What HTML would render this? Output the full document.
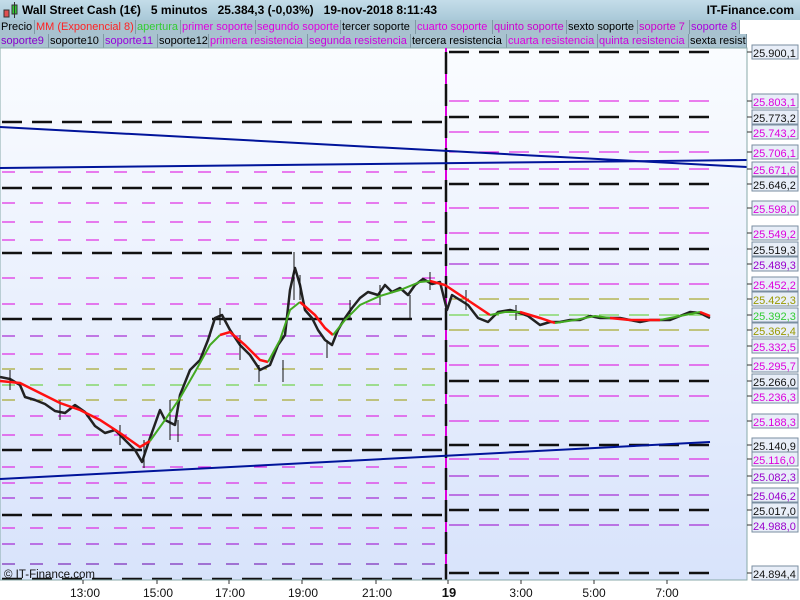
<!DOCTYPE html>
<html><head><meta charset="utf-8"><style>
*{margin:0;padding:0}
body{width:800px;height:600px;overflow:hidden;background:#fff;font-family:"Liberation Sans",sans-serif;position:relative}
#title{position:absolute;left:0;top:0;width:800px;height:20px;background:linear-gradient(#c4dde9,#a9c9d8);font-weight:bold;font-size:12px;line-height:20px}
.row{position:absolute;left:0;height:14px;font-size:11px;line-height:14px;white-space:nowrap;display:flex}
.row span{background:#a8c2cf;border-right:1px solid #7f98a4;padding:0 1px;box-sizing:border-box;overflow:hidden}
</style></head><body>
<div id="title"><svg width="18" height="18" style="position:absolute;left:2px;top:2px"><rect x="2" y="8" width="5" height="7" fill="#e05050" stroke="#333" stroke-width="1"/><rect x="10" y="3" width="5" height="9" fill="#3c3" stroke="#333"/><line x1="12.5" y1="0" x2="12.5" y2="16" stroke="#333"/></svg><span style="position:absolute;left:22px">Wall Street Cash (1€)&nbsp;&nbsp;&nbsp;5 minutos&nbsp;&nbsp;&nbsp;25.384,3 (-0,03%)&nbsp;&nbsp;&nbsp;19-nov-2018 8:11:43</span><span style="position:absolute;right:6px">IT-Finance.com</span></div>
<div class="row" style="top:20px;width:740px">
<span style="width:35px">Precio</span><span style="width:101px;color:#f22">MM (Exponencial 8)</span><span style="width:45px;color:#3c3">apertura</span><span style="width:75px;color:#d0d">primer soporte</span><span style="width:85px;color:#d0d">segundo soporte</span><span style="width:75px">tercer soporte</span><span style="width:77px;color:#d0d">cuarto soporte</span><span style="width:74px;color:#c0c">quinto soporte</span><span style="width:71px">sexto soporte</span><span style="width:52px;color:#c0c">soporte 7</span><span style="width:50px;color:#a0d">soporte 8</span></div>
<div class="row" style="top:34px;width:747px">
<span style="width:49px;color:#80c">soporte9</span><span style="width:55px">soporte10</span><span style="width:54px;color:#90d">soporte11</span><span style="width:51px">soporte12</span><span style="width:99px;color:#d0d">primera resistencia</span><span style="width:103px;color:#c0d">segunda resistencia</span><span style="width:96px">tercera resistencia</span><span style="width:91px;color:#d0d">cuarta resistencia</span><span style="width:91px;color:#c0d">quinta resistencia</span><span style="width:58px">sexta resist</span></div>
<svg width="800" height="600" style="position:absolute;left:0;top:0" font-family="Liberation Sans" font-size="12">
<defs><linearGradient id="bg" x1="0" y1="0" x2="0" y2="1"><stop offset="0" stop-color="#fafcff"/><stop offset="1" stop-color="#d8e3fb"/></linearGradient></defs>
<rect x="0" y="48" width="747" height="532" fill="url(#bg)" stroke="#8aa" stroke-width="1"/>
<g fill="none">
<g stroke="#111" stroke-width="2.5" stroke-dasharray="20 10">
<path d="M2 122H443M2 188H443M2 253H443M2 319H443M2 450H443M2 515H443M2 579H443"/></g>
<g stroke="#d0d" stroke-width="1" stroke-dasharray="13 15">
<path d="M2 172H443M2 203H443M2 222H443M2 240H443M2 278H443M2 304H443M2 354H443M2 416H443M2 435H443M2 467H443M2 483H443M2 528H443"/></g>
<g stroke-width="1" stroke-dasharray="13 15">
<path stroke="#90c" d="M2 336H443M2 498H443M2 544H443"/><path stroke="#60a" d="M2 564H443"/>
<path stroke="#990" d="M2 369H443M2 400H443"/><path stroke="#5c2" d="M2 385H443"/></g>
<g stroke="#111" stroke-width="2.5" stroke-dasharray="20 10">
<path d="M449 52H710M449 117H710M449 184H710M449 249H710M449 381H710M449 445H710M449 510H710M449 573H710"/></g>
<g stroke="#d0d" stroke-width="1" stroke-dasharray="20 10">
<path d="M449 101H710M449 132H710M449 152H710M449 169H710M449 208H710M449 233H710M449 284H710M449 346H710M449 365H710M449 396H710M449 421H710M449 459H710"/></g>
<g stroke-width="1" stroke-dasharray="20 10">
<path stroke="#90c" d="M449 264H710M449 476H710M449 495H710M449 525H710"/>
<path stroke="#990" d="M449 299H710M449 330H710"/><path stroke="#5c2" d="M449 315H710"/></g>
<path d="M446 48V580" stroke="#d0d" stroke-width="2"/>
<path d="M446 52V580" stroke="#111" stroke-width="2.5" stroke-dasharray="22 10"/>
<g stroke="#00149a" stroke-width="2"><path d="M0 127L747 167"/><path d="M0 168L747 160"/><path d="M0 479L710 442"/></g>
<polyline stroke="#222" stroke-width="2.5" stroke-linejoin="round" points="0,377 10,379 20,385 25,397 35,400 45,404 55,411 65,413 75,405 85,412 95,426 105,433 115,430 125,440 135,450 142,462 150,438 160,410 165,420 175,425 180,395 190,370 200,360 208,340 215,318 222,315 230,330 240,345 250,355 260,370 270,365 278,345 285,335 290,290 295,268 300,285 305,310 312,318 318,330 325,340 332,345 338,330 345,318 352,308 360,298 368,292 378,295 385,285 392,292 400,288 408,295 415,285 423,279 432,284 440,282 447,310 452,295 460,300 468,305 478,318 488,322 498,312 510,310 520,313 528,316 540,325 550,322 560,322 570,320 580,320 590,316 600,318 610,318 620,318 630,320 640,322 650,320 660,320 670,320 680,316 690,312 700,313 710,318"/>
<g stroke="#111" stroke-width="1"><path d="M144 440V468M178 420V442M259 365V382M294 252V300M283 360V382M327 340V358M410 295V318M466 290V310M516 305V320M10 370V390M60 400V420M120 425V445M170 400V440M220 308V325M240 335V360M300 275V300M350 300V320M380 285V305M430 272V290"/></g>
<polyline stroke="#f11" stroke-width="2.5" points="0,381 20,383 40,393 60,403 80,410 100,420 120,433 140,447 150,441"/>
<polyline stroke="#4a2" stroke-width="2" points="150,441 165,420 180,398 195,372 210,345 220,335"/>
<polyline stroke="#f11" stroke-width="2.5" points="220,335 230,332 245,345 260,360 268,362"/>
<polyline stroke="#4a2" stroke-width="2" points="268,362 280,340 290,310 300,302"/>
<polyline stroke="#f11" stroke-width="2.5" points="300,302 315,315 325,328 333,335"/>
<polyline stroke="#4a2" stroke-width="2" points="333,335 345,320 360,305 380,296 400,290 420,282 430,281"/>
<polyline stroke="#f11" stroke-width="2.5" points="430,281 445,285 460,295 475,305 490,315"/>
<polyline stroke="#4a2" stroke-width="2" points="490,315 505,312 520,312"/>
<polyline stroke="#f11" stroke-width="2.5" points="520,312 540,318 555,323"/>
<polyline stroke="#4a2" stroke-width="2" points="555,323 575,320 595,316 610,318"/>
<polyline stroke="#f11" stroke-width="2.5" points="610,318 630,320 660,320"/>
<polyline stroke="#4a2" stroke-width="2" points="660,320 680,316 700,312"/>
<polyline stroke="#f11" stroke-width="2.5" points="700,312 710,316"/>
</g>
<text x="4" y="578" fill="#111" font-size="11.5">© IT-Finance.com</text>
<line x1="747" y1="48" x2="747" y2="580" stroke="#8aa"/>
<g stroke="#7a8ea0" fill="#e8eef8">
<rect x="752" y="45" width="46" height="14"/><rect x="752" y="94" width="46" height="14"/><rect x="752" y="110" width="46" height="14"/><rect x="752" y="125" width="46" height="14"/><rect x="752" y="145" width="46" height="14"/><rect x="752" y="162" width="46" height="14"/><rect x="752" y="177" width="46" height="14"/><rect x="752" y="201" width="46" height="14"/><rect x="752" y="226" width="46" height="14"/><rect x="752" y="242" width="46" height="14"/><rect x="752" y="257" width="46" height="14"/><rect x="752" y="277" width="46" height="14"/><rect x="752" y="292" width="46" height="14"/><rect x="752" y="308" width="46" height="14"/><rect x="752" y="323" width="46" height="14"/><rect x="752" y="339" width="46" height="14"/><rect x="752" y="358" width="46" height="14"/><rect x="752" y="374" width="46" height="14"/><rect x="752" y="389" width="46" height="14"/><rect x="752" y="414" width="46" height="14"/><rect x="752" y="438" width="46" height="14"/><rect x="752" y="452" width="46" height="14"/><rect x="752" y="469" width="46" height="14"/><rect x="752" y="488" width="46" height="14"/><rect x="752" y="503" width="46" height="14"/><rect x="752" y="518" width="46" height="14"/><rect x="752" y="566" width="46" height="14"/></g>
<g stroke="#333"><path d="M747 52h5M747 101h5M747 117h5M747 132h5M747 152h5M747 169h5M747 184h5M747 208h5M747 233h5M747 249h5M747 264h5M747 284h5M747 299h5M747 315h5M747 330h5M747 346h5M747 365h5M747 381h5M747 396h5M747 421h5M747 445h5M747 459h5M747 476h5M747 495h5M747 510h5M747 525h5M747 573h5"/></g>
<g font-size="11">
<text x="753" y="57" fill="#111">25.900,1</text><text x="753" y="106" fill="#d0d">25.803,1</text><text x="753" y="122" fill="#111">25.773,2</text><text x="753" y="137" fill="#d0d">25.743,2</text><text x="753" y="157" fill="#d0d">25.706,1</text><text x="753" y="174" fill="#d0d">25.671,6</text><text x="753" y="189" fill="#111">25.646,2</text><text x="753" y="213" fill="#d0d">25.598,0</text><text x="753" y="238" fill="#d0d">25.549,2</text><text x="753" y="254" fill="#111">25.519,3</text><text x="753" y="269" fill="#90c">25.489,3</text><text x="753" y="289" fill="#d0d">25.452,2</text><text x="753" y="304" fill="#990">25.422,3</text><text x="753" y="320" fill="#3c3">25.392,3</text><text x="753" y="335" fill="#990">25.362,4</text><text x="753" y="351" fill="#d0d">25.332,5</text><text x="753" y="370" fill="#d0d">25.295,7</text><text x="753" y="386" fill="#111">25.266,0</text><text x="753" y="401" fill="#d0d">25.236,3</text><text x="753" y="426" fill="#d0d">25.188,3</text><text x="753" y="450" fill="#111">25.140,9</text><text x="753" y="464" fill="#d0d">25.116,0</text><text x="753" y="481" fill="#90c">25.082,3</text><text x="753" y="500" fill="#90c">25.046,2</text><text x="753" y="515" fill="#111">25.017,0</text><text x="753" y="530" fill="#90c">24.988,0</text><text x="753" y="578" fill="#111">24.894,4</text></g>
<line x1="0" y1="580" x2="747" y2="580" stroke="#8aa"/>
<g stroke="#333"><path d="M83 580v4M157 580v4M229 580v4M302 580v4M376 580v4M448 580v4M521 580v4M594 580v4M667 580v4"/></g>
<g text-anchor="middle" fill="#111" font-size="12"><text x="85" y="597">13:00</text><text x="158" y="597">15:00</text><text x="230" y="597">17:00</text><text x="303" y="597">19:00</text><text x="377" y="597">21:00</text><text x="449" y="597" font-weight="bold" font-size="13">19</text><text x="521" y="597">3:00</text><text x="594" y="597">5:00</text><text x="667" y="597">7:00</text></g>
</svg>
</body></html>
